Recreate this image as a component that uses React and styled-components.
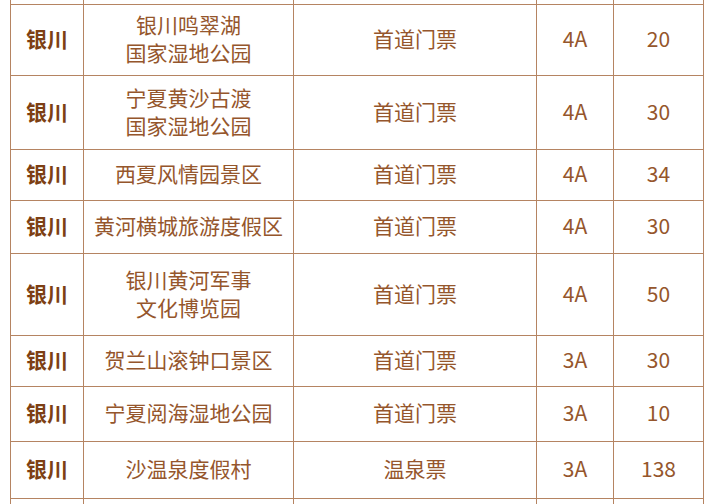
import React from "react";
import styled, { createGlobalStyle } from "styled-components";

const Global = createGlobalStyle`
  html, body { margin: 0; padding: 0; background: #ffffff; }
  body { width: 718px; height: 504px; overflow: hidden; }
`;

const Page = styled.div`
  width: 718px;
  height: 504px;
  overflow: hidden;
  background: #ffffff;
  padding-left: 10px;
  box-sizing: border-box;
`;

const Table = styled.table`
  border-collapse: collapse;
  table-layout: fixed;
  width: 694px;
  margin-top: -36px;
  font-family: "Noto Sans CJK SC", "Noto Sans", sans-serif;
  font-size: 21px;
  color: #95562c;
`;

const Col = styled.col`
  width: ${(p) => p.$w}px;
`;

const Row = styled.tr`
  height: ${(p) => p.$h}px;
`;

const Cell = styled.td`
  border: 1px solid #b58462;
  text-align: center;
  vertical-align: middle;
  padding: 0 4px 4px;
  line-height: 28px;
  font-weight: ${(p) => (p.$bold ? 700 : 400)};
  color: ${(p) => (p.$bold ? "#7d3f14" : "#95562c")};
`;

const rows = [
  { h: 71, name: ["银川鸣翠湖", "国家湿地公园"], type: "首道门票", lvl: "4A", price: "20" },
  { h: 74, name: ["宁夏黄沙古渡", "国家湿地公园"], type: "首道门票", lvl: "4A", price: "30" },
  { h: 51, name: ["西夏风情园景区"], type: "首道门票", lvl: "4A", price: "34" },
  { h: 53, name: ["黄河横城旅游度假区"], type: "首道门票", lvl: "4A", price: "30" },
  { h: 82, name: ["银川黄河军事", "文化博览园"], type: "首道门票", lvl: "4A", price: "50" },
  { h: 51, name: ["贺兰山滚钟口景区"], type: "首道门票", lvl: "3A", price: "30" },
  { h: 55, name: ["宁夏阅海湿地公园"], type: "首道门票", lvl: "3A", price: "10" },
  { h: 57, name: ["沙温泉度假村"], type: "温泉票", lvl: "3A", price: "138" },
];

export default function App() {
  return (
    <Page>
      <Global />
      <Table>
        <colgroup>
          <Col $w={73} />
          <Col $w={210} />
          <Col $w={243} />
          <Col $w={77} />
          <Col $w={90} />
        </colgroup>
        <tbody>
          <Row $h={40}>
            <Cell /><Cell /><Cell /><Cell /><Cell />
          </Row>
          {rows.map((r, i) => (
            <Row key={i} $h={r.h}>
              <Cell $bold>银川</Cell>
              <Cell>
                {r.name.map((n, j) => (
                  <div key={j}>{n}</div>
                ))}
              </Cell>
              <Cell>{r.type}</Cell>
              <Cell>{r.lvl}</Cell>
              <Cell>{r.price}</Cell>
            </Row>
          ))}
          <Row $h={40}>
            <Cell /><Cell /><Cell /><Cell /><Cell />
          </Row>
        </tbody>
      </Table>
    </Page>
  );
}
